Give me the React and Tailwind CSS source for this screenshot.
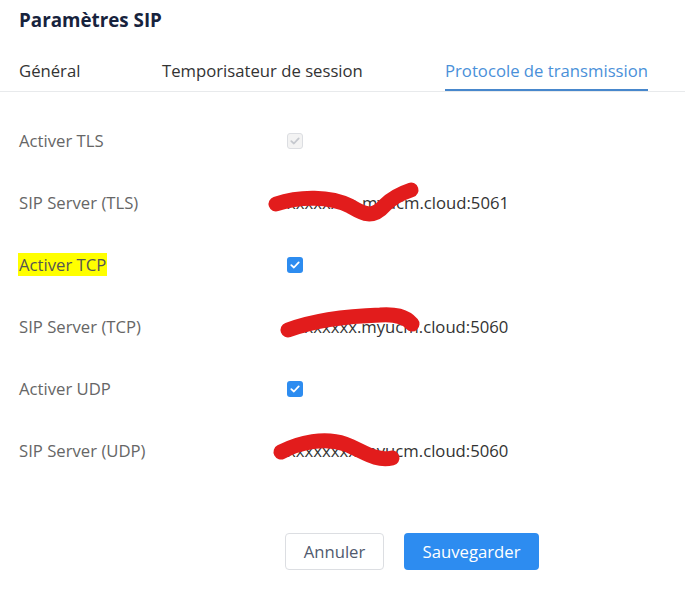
import React from "react";

function Check({ disabled }) {
  return (
    <span
      className={
        disabled
          ? "flex h-[16px] w-[16px] items-center justify-center rounded-[3px] border border-[#dcdee2] bg-[#f3f3f3]"
          : "flex h-[16px] w-[16px] items-center justify-center rounded-[3px] bg-[#2d8cf0]"
      }
    >
      <svg width="10" height="8" viewBox="0 0 10 8" fill="none">
        <path
          d="M1.3 4.1 L3.9 6.5 L8.7 1.4"
          stroke={disabled ? "#c5c8ce" : "#ffffff"}
          strokeWidth="1.8"
          strokeLinecap="round"
          strokeLinejoin="round"
        />
      </svg>
    </span>
  );
}

function Row({ label, highlight, children }) {
  return (
    <div className="flex h-[62px] items-center">
      <div className="w-[285px] pl-[18px]">
        <span className={highlight ? "bg-[#ffff00] px-[1px] text-[#555]" : "px-[1px] text-[#666]"}>{label}</span>
      </div>
      <div className="flex items-center text-[#333]">{children}</div>
    </div>
  );
}

export default function App() {
  return (
    <div className="relative h-[609px] w-[685px] bg-white font-['Open_Sans',sans-serif] text-[16.7px] leading-[24px]">
      <div className="pl-[19px] pt-[8px] text-[18.8px] font-bold text-[#17233d]">Paramètres SIP</div>
      <div className="mt-[27px] flex border-b border-[#e8eaec] pl-[19px]">
        <div className="w-[143px]">
          <div className="inline-block border-b-2 border-transparent pb-[6px] text-[#333]">Général</div>
        </div>
        <div className="w-[283px]">
          <div className="inline-block border-b-2 border-transparent pb-[6px] text-[#333]">Temporisateur de session</div>
        </div>
        <div className="border-b-2 border-[#4787cc] pb-[6px] text-[#4a90d9]">Protocole de transmission</div>
      </div>
      <div className="pt-[18px]">
        <Row label="Activer TLS">
          <span className="ml-[2px]"><Check disabled /></span>
        </Row>
        <Row label="SIP Server (TLS)">
          <span className="pl-[2px]">xxxxxxxe.myucm.cloud:5061</span>
        </Row>
        <Row label="Activer TCP" highlight>
          <span className="ml-[2px]"><Check /></span>
        </Row>
        <Row label="SIP Server (TCP)">
          <span className="pl-[2px]">xxxxxxxx.myucm.cloud:5060</span>
        </Row>
        <Row label="Activer UDP">
          <span className="ml-[2px]"><Check /></span>
        </Row>
        <Row label="SIP Server (UDP)">
          <span className="pl-[2px]">xxxxxxxx.myucm.cloud:5060</span>
        </Row>
      </div>
      <div className="mt-[51px] flex gap-[20px] pl-[285px]">
        <button className="h-[37px] w-[99px] rounded-[4px] border border-[#dcdee2] bg-white text-[16.7px] text-[#515a6e]">Annuler</button>
        <button className="h-[37px] w-[135px] rounded-[4px] bg-[#2d8cf0] text-[16.7px] text-white">Sauvegarder</button>
      </div>
      <svg className="pointer-events-none absolute left-0 top-0" width="685" height="609" viewBox="0 0 685 609" fill="none">
        <g stroke="#e21c1c" strokeLinecap="round" strokeLinejoin="round" strokeWidth="15">
          <path d="M276 204 C 300 196, 330 196, 350 206 C 362 213, 372 220, 385 205 C 393 197, 402 193, 411 190" />
          <path d="M288 330 C 315 320, 350 316, 380 315 C 395 314, 405 316, 412 324" />
          <path d="M281 452 C 300 442, 325 437, 345 444 C 362 450, 375 462, 392 458" />
        </g>
      </svg>
    </div>
  );
}
